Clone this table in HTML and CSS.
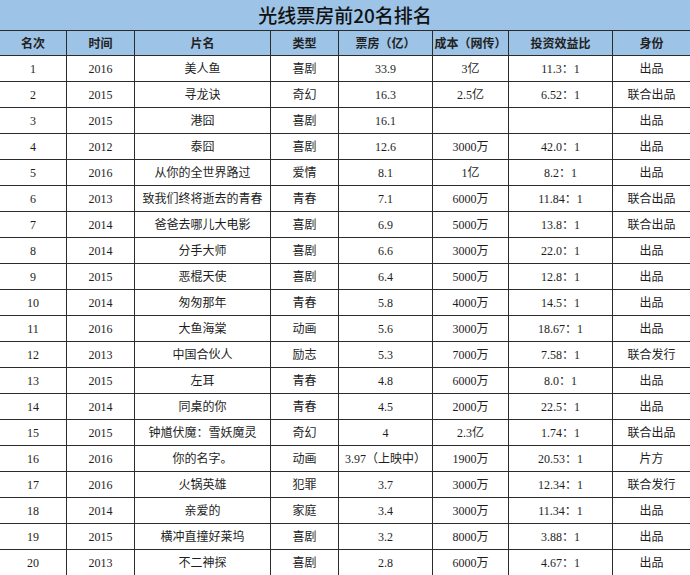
FILE: index.html
```html
<!DOCTYPE html>
<html lang="zh">
<head>
<meta charset="utf-8">
<title>光线票房前20名排名</title>
<link rel="stylesheet" href="styles.css">
</head>
<body>
<table class="sheet">
  <colgroup>
    <col class="c1"><col class="c2"><col class="c3"><col class="c4"><col class="c5"><col class="c6"><col class="c7"><col class="c8">
  </colgroup>
  <thead>
    <tr class="title-row"><th colspan="8">光线票房前20名排名</th></tr>
    <tr class="head-row">
      <th>名次</th><th>时间</th><th>片名</th><th>类型</th><th>票房（亿）</th><th>成本（网传）</th><th>投资效益比</th><th>身份</th>
    </tr>
  </thead>
  <tbody>
    <tr><td>1</td><td>2016</td><td>美人鱼</td><td>喜剧</td><td>33.9</td><td>3亿</td><td>11.3：1</td><td>出品</td></tr>
    <tr><td>2</td><td>2015</td><td>寻龙诀</td><td>奇幻</td><td>16.3</td><td>2.5亿</td><td>6.52：1</td><td>联合出品</td></tr>
    <tr><td>3</td><td>2015</td><td>港囧</td><td>喜剧</td><td>16.1</td><td></td><td></td><td>出品</td></tr>
    <tr><td>4</td><td>2012</td><td>泰囧</td><td>喜剧</td><td>12.6</td><td>3000万</td><td>42.0：1</td><td>出品</td></tr>
    <tr><td>5</td><td>2016</td><td>从你的全世界路过</td><td>爱情</td><td>8.1</td><td>1亿</td><td>8.2：1</td><td>出品</td></tr>
    <tr><td>6</td><td>2013</td><td>致我们终将逝去的青春</td><td>青春</td><td>7.1</td><td>6000万</td><td>11.84：1</td><td>联合出品</td></tr>
    <tr><td>7</td><td>2014</td><td>爸爸去哪儿大电影</td><td>喜剧</td><td>6.9</td><td>5000万</td><td>13.8：1</td><td>联合出品</td></tr>
    <tr><td>8</td><td>2014</td><td>分手大师</td><td>喜剧</td><td>6.6</td><td>3000万</td><td>22.0：1</td><td>出品</td></tr>
    <tr><td>9</td><td>2015</td><td>恶棍天使</td><td>喜剧</td><td>6.4</td><td>5000万</td><td>12.8：1</td><td>出品</td></tr>
    <tr><td>10</td><td>2014</td><td>匆匆那年</td><td>青春</td><td>5.8</td><td>4000万</td><td>14.5：1</td><td>出品</td></tr>
    <tr><td>11</td><td>2016</td><td>大鱼海棠</td><td>动画</td><td>5.6</td><td>3000万</td><td>18.67：1</td><td>出品</td></tr>
    <tr><td>12</td><td>2013</td><td>中国合伙人</td><td>励志</td><td>5.3</td><td>7000万</td><td>7.58：1</td><td>联合发行</td></tr>
    <tr><td>13</td><td>2015</td><td>左耳</td><td>青春</td><td>4.8</td><td>6000万</td><td>8.0：1</td><td>出品</td></tr>
    <tr><td>14</td><td>2014</td><td>同桌的你</td><td>青春</td><td>4.5</td><td>2000万</td><td>22.5：1</td><td>出品</td></tr>
    <tr><td>15</td><td>2015</td><td>钟馗伏魔：雪妖魔灵</td><td>奇幻</td><td>4</td><td>2.3亿</td><td>1.74：1</td><td>联合出品</td></tr>
    <tr><td>16</td><td>2016</td><td>你的名字。</td><td>动画</td><td>3.97（上映中）</td><td>1900万</td><td>20.53：1</td><td>片方</td></tr>
    <tr><td>17</td><td>2016</td><td>火锅英雄</td><td>犯罪</td><td>3.7</td><td>3000万</td><td>12.34：1</td><td>联合发行</td></tr>
    <tr><td>18</td><td>2014</td><td>亲爱的</td><td>家庭</td><td>3.4</td><td>3000万</td><td>11.34：1</td><td>出品</td></tr>
    <tr><td>19</td><td>2015</td><td>横冲直撞好莱坞</td><td>喜剧</td><td>3.2</td><td>8000万</td><td>3.88：1</td><td>出品</td></tr>
    <tr><td>20</td><td>2013</td><td>不二神探</td><td>喜剧</td><td>2.8</td><td>6000万</td><td>4.67：1</td><td>出品</td></tr>
  </tbody>
</table>
</body>
</html>
```
FILE: styles.css
```css
html, body {
  margin: 0;
  padding: 0;
  background: #ffffff;
}
.sheet {
  border-collapse: collapse;
  table-layout: fixed;
  width: 691px;
  margin-left: -1px;
  font-family: "Liberation Serif", "Noto Sans CJK SC", serif;
  font-size: 12px;
  color: #1e1e1e;
}
.c1 { width: 67px; }
.c2 { width: 68px; }
.c3 { width: 136px; }
.c4 { width: 68px; }
.c5 { width: 94px; }
.c6 { width: 76px; }
.c7 { width: 104px; }
.c8 { width: 78px; }

.sheet th, .sheet td {
  border: 1px solid #2b2b2b;
  padding: 0;
  text-align: center;
  vertical-align: middle;
  white-space: nowrap;
  overflow: hidden;
  line-height: 16px;
}
.title-row th {
  height: 30px;
  line-height: 30px;
  background: #9dc3e6;
  font-family: "Noto Sans CJK SC", sans-serif;
  font-size: 19px;
  font-weight: 500;
  color: #111;
  border-top: none;
  border-left: none;
  border-right: none;
}
.head-row th {
  height: 24px;
  background: #9dc3e6;
  font-family: "Noto Sans CJK SC", sans-serif;
  font-size: 12px;
  font-weight: 700;
  color: #222;
}
.sheet td {
  height: 25px;
}
```
